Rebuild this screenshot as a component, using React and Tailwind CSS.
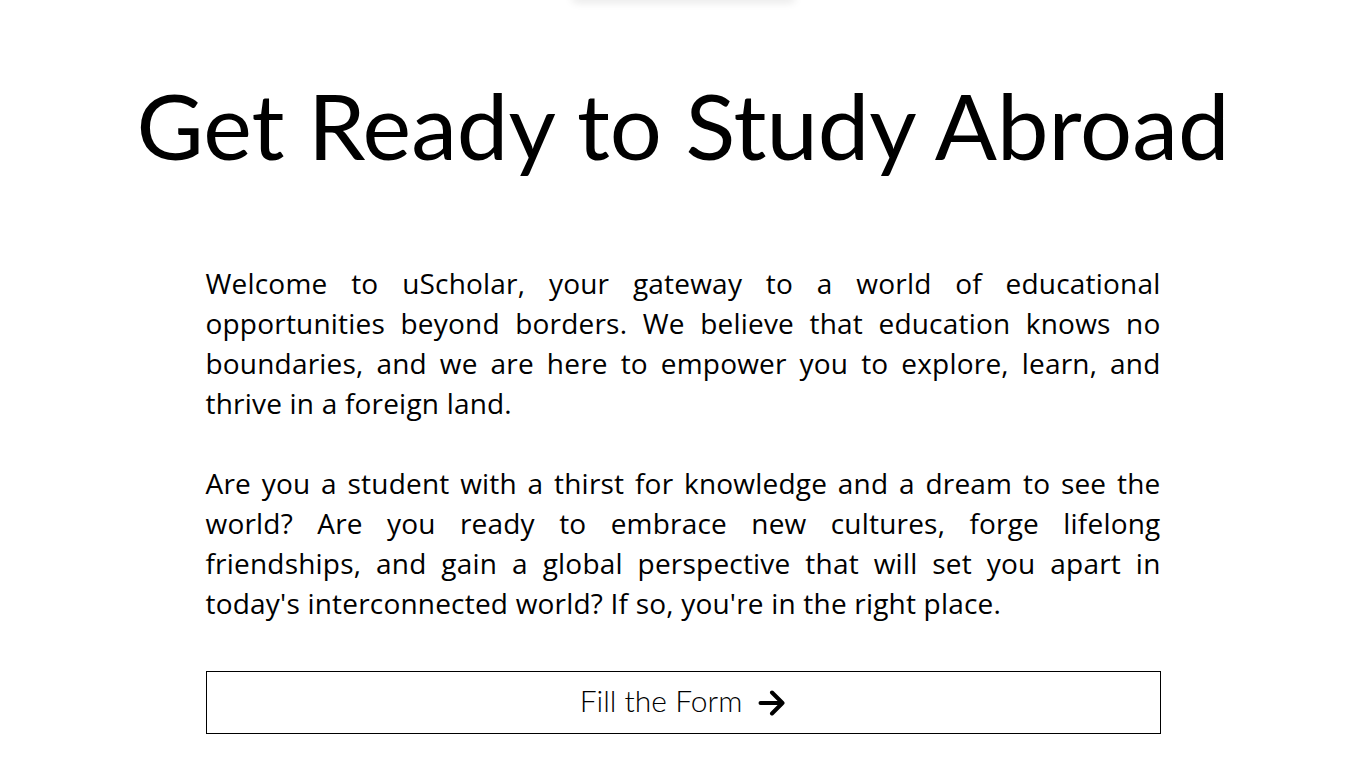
import React from 'react';

const paragraphs = [
  'Welcome to uScholar, your gateway to a world of educational opportunities beyond borders. We believe that education knows no boundaries, and we are here to empower you to explore, learn, and thrive in a foreign land.',
  "Are you a student with a thirst for knowledge and a dream to see the world? Are you ready to embrace new cultures, forge lifelong friendships, and gain a global perspective that will set you apart in today's interconnected world? If so, you're in the right place.",
];

const App = () => {
  return (
    <div className="min-h-[860px] bg-white text-black">
      {/* navbar peeking from above */}
      <div className="mx-auto -mt-[6px] h-[6px] w-[225px] rounded-b-md bg-white shadow-[0_2px_8px_rgba(0,0,0,0.12)]" />

      <h1 className="mt-[79px] text-center font-['Lato',sans-serif] text-[92px] font-normal leading-[92px]">
        Get Ready to Study Abroad
      </h1>

      <div className="mx-auto mt-[92px] w-[955px] font-['Open_Sans',sans-serif]">
        {paragraphs.map((text, i) => (
          <p
            key={i}
            className={`text-justify text-[28px] leading-[40px] tracking-[0.2px] ${i > 0 ? 'mt-[40px]' : ''}`}
          >
            {text}
          </p>
        ))}

        <button className="mt-[48px] flex h-[63px] w-full items-center justify-center gap-[16px] border border-black bg-white">
          <span className="pb-[4px] font-['Lato',sans-serif] text-[30px] font-light">Fill the Form</span>
          <svg
            width="28"
            height="26"
            viewBox="0 0 28 26"
            fill="none"
            stroke="black"
            strokeWidth="4"
            strokeLinecap="round"
            strokeLinejoin="round"
          >
            <path d="M2.5 13h22M14 2.5L24.5 13 14 23.5" />
          </svg>
        </button>
      </div>
    </div>
  );
};

export default App;
